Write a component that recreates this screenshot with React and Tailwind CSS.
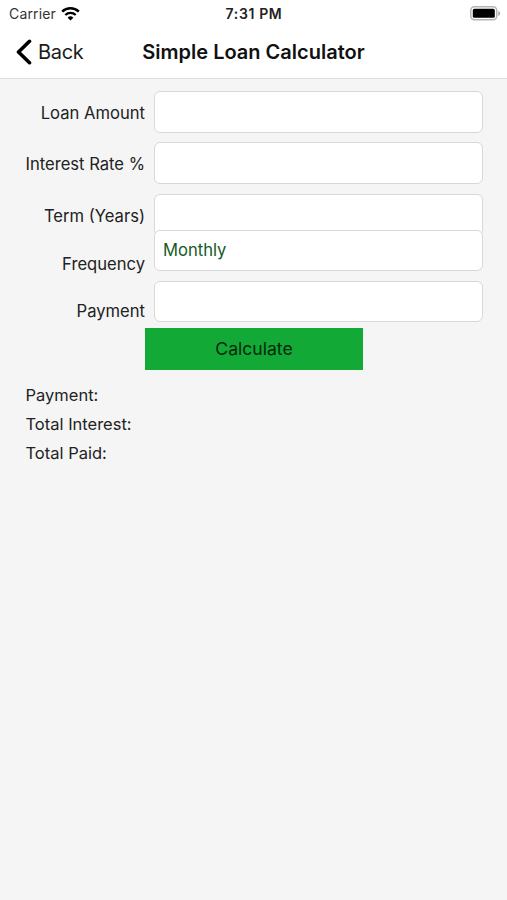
import { useState } from "react";

const frequencies = ["Monthly"];

function StatusBar() {
  return (
    <div className="grid grid-cols-3 items-center h-[27px] pl-[9px] pr-[6px]">
      <div className="flex items-center gap-[5px]">
        <span className="text-[14px] leading-none tracking-[0.15px] text-[#333]">Carrier</span>
        <svg className="w-[19px] h-[14px]" viewBox="0 0 19 14" fill="none" stroke="#000">
          <path d="M1.2 4.7a11.8 11.8 0 0 1 16.6 0" strokeWidth="2.5" />
          <path d="M4.3 8a7.4 7.4 0 0 1 10.4 0" strokeWidth="2.3" />
          <path d="M9.5 13.6 6.6 10.7a4.2 4.2 0 0 1 5.8 0z" fill="#000" stroke="none" />
        </svg>
      </div>
      <span className="-mr-[1px] -ml-[3px] text-center text-[14px] leading-none font-semibold tracking-[0.65px] text-[#222]">
        7:31 PM
      </span>
      <svg className="justify-self-end w-[31px] h-[15px]" viewBox="0 0 31 15">
        <rect x="0.75" y="0.75" width="26" height="13" rx="3.7" fill="#fff" stroke="#b5b5b5" strokeWidth="1.5" />
        <rect x="2.8" y="2.8" width="22" height="9" rx="1.6" fill="#000" />
        <path d="M28.3 5c2.4.8 2.4 4.2 0 5z" fill="#a8a8a8" />
      </svg>
    </div>
  );
}

function Header() {
  return (
    <header className="h-[79px] bg-white border-b border-[#dedede]">
      <StatusBar />
      <div className="grid grid-cols-[1fr_auto_1fr] items-center h-[50px]">
        <button type="button" className="flex items-center gap-[5px] pl-[16px] text-[20px] tracking-[-0.3px] text-[#1c1c1c]">
          <svg className="w-[17px] h-[26px]" viewBox="0 0 17 26" fill="none" stroke="#000" strokeWidth="3.6" strokeLinecap="round" strokeLinejoin="round">
            <path d="M13.5 2.3 2.5 13l11 10.7" />
          </svg>
          Back
        </button>
        <h1 className="text-[20px] font-semibold text-[#111]">Simple Loan Calculator</h1>
      </div>
    </header>
  );
}

function Field({ label, value, onChange, className, labelClass }) {
  return (
    <label className={`flex items-start ${className}`}>
      <span className={`w-[145px] shrink-0 text-right text-[16.6px] leading-5 text-[#222] ${labelClass}`}>
        {label}
      </span>
      <input
        value={value}
        onChange={(e) => onChange(e.target.value)}
        className="relative ml-[9px] w-[329px] h-full rounded-[6px] border-[1.5px] border-[#d8d8d8] bg-white px-[8px] pb-[1px] text-[16.6px] text-[#145a24] outline-none"
      />
    </label>
  );
}

export default function App() {
  const [amount, setAmount] = useState("");
  const [rate, setRate] = useState("");
  const [term, setTerm] = useState("");
  const [frequency, setFrequency] = useState(frequencies[0]);
  const [payment, setPayment] = useState("");

  return (
    <div className="w-full h-screen bg-[#f5f5f5] font-['Inter','Liberation_Sans',sans-serif] overflow-hidden">
      <Header />

      <form className="pt-[12px]" onSubmit={(e) => e.preventDefault()}>
        <Field label="Loan Amount" value={amount} onChange={setAmount} className="h-[42px]" labelClass="pt-[12px]" />
        <Field label="Interest Rate %" value={rate} onChange={setRate} className="mt-[9px] h-[42px]" labelClass="pt-[12px]" />
        <Field label="Term (Years)" value={term} onChange={setTerm} className="mt-[10px] h-[42px]" labelClass="pt-[12px]" />
        {/* Frequency sits slightly over the term input */}
        <Field label="Frequency" value={frequency} onChange={setFrequency} className="-mt-[6px] h-[41px]" labelClass="pt-[24px]" />
        <Field label="Payment" value={payment} onChange={setPayment} className="mt-[10px] h-[41px]" labelClass="pt-[20px]" />

        <button
          type="submit"
          className="block mt-[6px] ml-[145px] w-[218px] h-[42px] pt-[1px] bg-[#12a936] text-[17.6px] text-[#06280c]"
        >
          Calculate
        </button>
      </form>

      <div className="mt-[11px] pl-[25.5px] text-[16.5px] leading-[29px] text-[#222]">
        <p>Payment:</p>
        <p>Total Interest:</p>
        <p>Total Paid:</p>
      </div>
    </div>
  );
}
